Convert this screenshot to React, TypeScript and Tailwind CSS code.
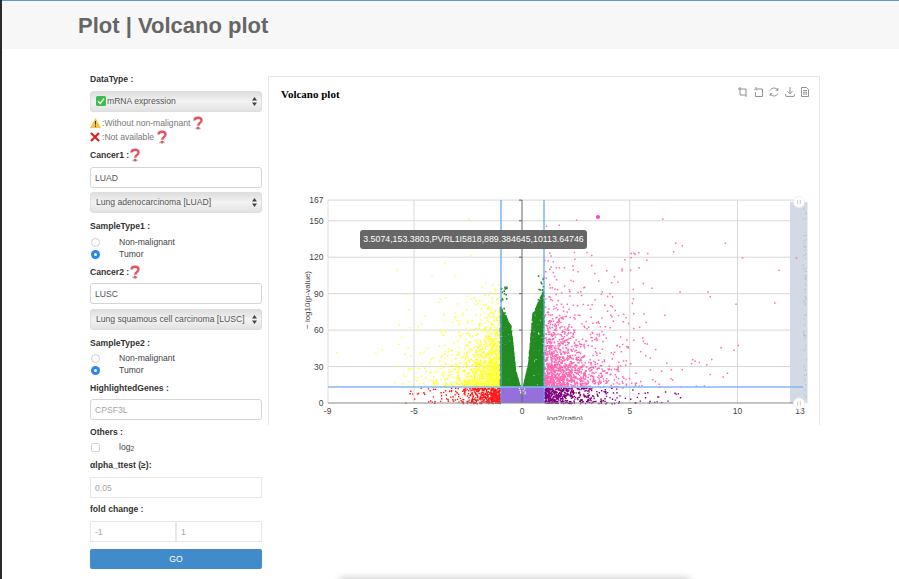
import { useMemo, type ReactNode } from "react";

const sans = { fontFamily: '"Liberation Sans", Arial, sans-serif' };

const px = (v: number) => (v < 0 ? 522 + v * 21.6 : 522 + v * 21.55);
const py = (v: number) => 403 - v * 1.215;

const rng = (seed: number) => () => {
  seed |= 0;
  seed = (seed + 0x6d2b79f5) | 0;
  let t = Math.imul(seed ^ (seed >>> 15), 1 | seed);
  t = (t + Math.imul(t ^ (t >>> 7), 61 | t)) ^ t;
  return ((t ^ (t >>> 14)) >>> 0) / 4294967296;
};

const dot = (x: number, y: number, s = 1.4) =>
  `M${x.toFixed(1)} ${y.toFixed(1)}h${s}v${s}h-${s}z`;

// upper edge of the green cloud, by distance from zero
const greenCap = (a: number) => {
  if (a < 0.3) return 13 + (a - 0.08) * 70;
  if (a < 0.5) return 28 + (a - 0.3) * 190;
  return 66 + (a - 0.5) * 36;
};

const buildDots = () => {
  const r = rng(42);
  const expo = (m: number) => -Math.log(1 - r() * 0.999) * m;
  let green = "";
  let yellow = "";
  let pink = "";
  let red = "";
  let purple = "";
  let mid = "";
  let zoomShade = "";

  for (let i = 0; i < 5200; i++) {
    const side = r() < 0.5 ? -1 : 1;
    const a = 0.08 + Math.pow(r(), 0.85) * 0.92;
    const cap = greenCap(a) * (side < 0 ? 0.95 : 1.1);
    const v = 13 + Math.pow(r(), 1.05) * Math.max(cap - 13, 1);
    green += dot(px(side * a) - 0.8, py(v) - 0.8, 1.6);
  }
  for (let i = 0; i < 60; i++) {
    const side = r() < 0.4 ? -1 : 1;
    green += dot(px(side * (0.72 + r() * 0.28)), py(66 + r() * (side < 0 ? 30 : 40)), 1.6);
  }
  for (let i = 0; i < 1450; i++) {
    const a = 1.02 + expo(0.95);
    const v = 13 + expo(22);
    if (a > 6 || v > 112 - a * 6) continue;
    yellow += dot(px(-a), py(v));
  }
  const yellowExtras = [
    [-8.6, 15], [-8.6, 42], [-6.8, 42], [-6.5, 44], [-5.7, 65], [-5.6, 55], [-5.3, 46], [-5.8, 110],
    [-5.1, 29], [-4.9, 31], [-4.7, 66], [-5.4, 90], [-4.2, 105], [-3.6, 116], [-3.1, 105], [-2.5, 152],
    [-2.4, 122], [-5.4, 22], [-5.5, 24], [-4.5, 72],
  ];
  yellowExtras.forEach(([a, v]) => (yellow += dot(px(a), py(v))));
  for (let i = 0; i < 1300; i++) {
    const a = 1.02 + expo(1.2);
    const v = 13 + expo(24);
    if (a > 11 || v > 125) continue;
    pink += dot(px(a), py(v), 1.5);
  }
  for (let i = 0; i < 30; i++) {
    pink += dot(px(1 + r() * 5), py(40 + r() * 85), 1.5);
  }
  const pinkExtras = [
    [10.2, 120], [11.7, 83], [9.9, 82], [8.6, 92], [8.7, 88], [9.4, 132], [7.1, 132], [7.4, 130],
    [6.5, 152], [1.1, 146], [1.7, 147], [7.3, 92], [6, 95], [11.9, 110], [12.7, 120], [5, 110],
    [5.4, 112], [7, 125], [3.2, 122], [2.5, 151], [9.2, 46], [9.8, 44], [10, 48], [8, 35],
    [8.2, 34], [8.7, 24], [9.3, 22], [9.5, 25], [6.9, 28], [7.4, 28],
  ];
  pinkExtras.forEach(([a, v]) => (pink += dot(px(a), py(v), 1.5)));
  for (let i = 0; i < 480; i++) {
    const a = 1.02 + expo(0.85);
    if (a > 5.6) continue;
    red += dot(px(-a), py(r() * 12.8));
  }
  for (let i = 0; i < 500; i++) {
    const a = 1.02 + expo(1.0);
    if (a > 7.8) continue;
    purple += dot(px(a), py(r() * 12.8));
  }
  for (let i = 0; i < 12; i++) {
    purple += dot(px(5 + r() * 2.8), py(r() * 10));
  }
  for (let i = 0; i < 12; i++) {
    mid += dot(px(-0.15 + r() * 0.3), py(8 + r() * 5), 1.2);
  }
  for (let i = 0; i < 90; i++) {
    zoomShade += dot(803 + r() * 3, 205 + r() * 195, 1);
  }
  return { green, yellow, pink, red, purple, mid, zoomShade };
};

const Help = () => (
  <svg width="12" height="14" viewBox="0 0 11 13" className="shrink-0">
    <path d="M3 11.6h5" stroke="#bbb" strokeWidth="1.5" />
    <path d="M2.2 4.2C2.4 1 8.6.6 8.8 4c.1 2.4-3 2.3-3.1 5" fill="none" stroke="#e8525c" strokeWidth="2.2" />
    <circle cx="5.6" cy="11.2" r="1.3" fill="#e8525c" />
  </svg>
);

const Label = ({ children, className = "" }: { children: ReactNode; className?: string }) => (
  <div className={`flex items-center text-[8.6px] leading-[12px] font-bold text-[#333] ${className}`}>{children}</div>
);

const Select = ({ children, className = "" }: { children: ReactNode; className?: string }) => (
  <div
    className={`flex items-center justify-between h-[21px] pl-[5px] pr-[4px] rounded-[3px] border border-[#dedede] bg-gradient-to-b from-[#dedede] via-[#f3f3f3] to-[#e2e2e2] text-[8.6px] text-[#555] ${className}`}
  >
    <span className="flex items-center whitespace-nowrap">{children}</span>
    <svg width="5" height="9" viewBox="0 0 5 9">
      <path d="M2.5 0L5 3.4H0zM2.5 9L0 5.6h5z" fill="#444" />
    </svg>
  </div>
);

const TextBox = ({ value, placeholder, className = "" }: { value?: string; placeholder?: string; className?: string }) => (
  <input
    readOnly
    value={value}
    placeholder={placeholder}
    className={`block w-full h-[21px] px-[4px] border border-[#d5d5d5] rounded-[3px] bg-white text-[8.6px] text-[#555] placeholder:text-[#a5a5a5] outline-none ${className}`}
  />
);

const Radio = ({ checked, label }: { checked?: boolean; label: string }) => (
  <div className="flex items-center h-[12.5px]">
    {checked ? (
      <span className="flex items-center justify-center w-[9px] h-[9px] ml-[1px] rounded-full bg-[#2a85f5]">
        <span className="w-[3px] h-[3px] rounded-full bg-white" />
      </span>
    ) : (
      <span className="w-[9px] h-[9px] ml-[1px] rounded-full border border-[#cfcfcf] bg-white" />
    )}
    <span className="ml-[19px] text-[8.6px] text-[#444]">{label}</span>
  </div>
);

const Toolbar = () => (
  <div className="flex gap-[5.5px] mt-[10px] mr-[9px]">
    <svg width="10" height="10" viewBox="0 0 10 10" fill="none" stroke="#777" strokeWidth="0.8">
      <path d="M0 2h8v8M2 0v8h6" />
    </svg>
    <svg width="10" height="10" viewBox="0 0 10 10" fill="none" stroke="#777" strokeWidth="0.8">
      <path d="M2 0v2h6.5v7.5H1.5V5M0 3.5l1.5-1.5L3 3.5" />
    </svg>
    <svg width="10" height="10" viewBox="0 0 10 10" fill="none" stroke="#777" strokeWidth="0.8">
      <path d="M1 3.5A4.3 4.3 0 0 1 8.6 3M9 6.5A4.3 4.3 0 0 1 1.4 7M8.8 1v2.3H6.6M1.2 9V6.7h2.2" />
    </svg>
    <svg width="10" height="10" viewBox="0 0 10 10" fill="none" stroke="#777" strokeWidth="0.8">
      <path d="M5 0v6.5M2.5 4.2L5 6.8l2.5-2.6M0 7l1 2.4h8L10 7" />
    </svg>
    <svg width="10" height="10" viewBox="0 0 10 10" fill="none" stroke="#777" strokeWidth="0.8">
      <path d="M1.5.5h5l2 2v7h-7zM3 3.5h4M3 5.3h4M3 7.1h4" />
    </svg>
  </div>
);

const Chart = () => {
  const d = useMemo(buildDots, []);
  const vGrid = [-5, 5, 10];
  const hGrid = [30, 60, 90, 120, 150, 167];
  const xTicks: [number, string][] = [[-9, "-9"], [-5, "-5"], [0, "0"], [5, "5"], [10, "10"], [12.9, "13"]];
  const yTicks = [0, 30, 60, 90, 120, 150, 167];
  return (
    <svg viewBox="269 195 550 225" width="550" height="225" className="block" style={sans}>
      {vGrid.map((v) => (
        <line key={v} x1={px(v)} x2={px(v)} y1="200" y2="403" stroke="#d8d8d8" />
      ))}
      {hGrid.map((v) => (
        <line key={v} x1="328" x2="803" y1={py(v)} y2={py(v)} stroke="#d8d8d8" />
      ))}
      <line x1="328" x2="328" y1="200" y2="403" stroke="#ddd" />
      <rect x="790" y="202" width="17.5" height="201" fill="#d2dae5" />
      <path d={d.zoomShade} fill="#b5bcc6" />
      <path d={d.yellow} fill="#ffff33" />
      <path d={d.pink} fill="#ff69b4" />
      <path d={d.green} fill="#228b22" />
      <rect x="501" y="387" width="43" height="16" fill="#9370db" />
      <path d={d.mid} fill="#ffffff" />
      <path d={d.red} fill="#ff1a1a" />
      <path d={d.purple} fill="#800080" />
      <line x1="522" x2="522" y1="200" y2="403" stroke="#666" />
      {[30, 60, 90, 120, 150, 167].map((v) => (
        <line key={v} x1="519" x2="522" y1={py(v)} y2={py(v)} stroke="#666" />
      ))}
      <line x1="328" x2="803" y1="403" y2="403" stroke="#888" />
      <line x1="501" x2="501" y1="200" y2="403" stroke="#5b9ff5" strokeWidth="1.2" />
      <line x1="544" x2="544" y1="200" y2="403" stroke="#5b9ff5" strokeWidth="1.2" />
      <line x1="328" x2="803" y1="387" y2="387" stroke="#86b6f5" strokeWidth="1.6" />
      <circle cx="598" cy="217" r="2" fill="#ff40c0" />
      {xTicks.map(([v, t]) => (
        <text key={t} x={px(v)} y="414" textAnchor="middle" fontSize="8.5" fill="#444">
          {t}
        </text>
      ))}
      {yTicks.map((v) => (
        <text key={v} x="323.5" y={py(v) + 3} textAnchor="end" fontSize="8.5" fill="#444">
          {v}
        </text>
      ))}
      <text x="565" y="421" textAnchor="middle" fontSize="8" fill="#444">
        log2(ratio)
      </text>
      <text transform="translate(310 300) rotate(-90)" textAnchor="middle" fontSize="8" fill="#444">
        − log10(p-value)
      </text>
      {[[799, 202], [799, 403.5]].map(([x, y]) => (
        <g key={y}>
          <circle cx={x} cy={y} r="5.7" fill="#fff" stroke="#e4e4e4" strokeWidth="0.6" />
          <path d={`M${x - 1.3} ${y - 2}v4M${x + 1.3} ${y - 2}v4`} stroke="#bbb" strokeWidth="0.8" />
        </g>
      ))}
    </svg>
  );
};

export default function App() {
  return (
    <div className="relative w-[899px] h-[579px] overflow-hidden bg-white" style={sans}>
      <div className="absolute left-0 top-0 bottom-0 w-[2px] bg-[#2a2a2a]" />
      <div className="absolute left-[340px] bottom-[-6px] w-[350px] h-[8px] bg-[#d5d5d5] blur-[3px]" />
      <div className="h-[49px] pl-[78px] pt-[11px] bg-[#f7f7f7] border-t border-[#5b9bd5] text-[22px] leading-[28px] font-bold text-[#666]">
        Plot | Volcano plot
      </div>
      <div className="flex pl-[90px] pt-[27px]">
        <div className="w-[172px]">
          <Label className="mt-[-3px]">DataType :</Label>
          <Select className="mt-[6px]">
            <svg width="10" height="10" viewBox="0 0 10 10" className="mr-[1px]">
              <rect width="10" height="10" rx="1.5" fill="#3fbd4c" />
              <path d="M2 5.2l2.2 2.2L8 2.6" fill="none" stroke="#fff" strokeWidth="1.5" />
            </svg>
            mRNA expression
          </Select>
          <div className="flex items-center h-[14px] mt-[4px] text-[8.6px] text-[#777]">
            <svg width="11" height="10" viewBox="0 0 11 10">
              <path d="M5.5 0L11 10H0z" fill="#f5c542" />
              <path d="M5.5 3v3.6M5.5 7.6v1.2" stroke="#333" strokeWidth="1" />
            </svg>
            <span className="ml-[1px] mr-[2px]">:Without non-malignant</span>
            <Help />
          </div>
          <div className="flex items-center h-[14px] text-[8.6px] text-[#777]">
            <svg width="10" height="10" viewBox="0 0 10 10">
              <path d="M1 1l8 8M9 1l-8 8" stroke="#e0201c" strokeWidth="2.2" />
            </svg>
            <span className="ml-[2px] mr-[2px]">:Not available</span>
            <Help />
          </div>
          <Label className="mt-[4px]">
            Cancer1 :<Help />
          </Label>
          <TextBox value="LUAD" className="mt-[5px]" />
          <Select className="mt-[4px]">Lung adenocarcinoma [LUAD]</Select>
          <Label className="mt-[7px]">SampleType1 :</Label>
          <div className="mt-[4px]">
            <Radio label="Non-malignant" />
            <Radio checked label="Tumor" />
          </div>
          <Label className="mt-[4px]">
            Cancer2 :<Help />
          </Label>
          <TextBox value="LUSC" className="mt-[4px]" />
          <Select className="mt-[5px]">Lung squamous cell carcinoma [LUSC]</Select>
          <Label className="mt-[7px]">SampleType2 :</Label>
          <div className="mt-[3px]">
            <Radio label="Non-malignant" />
            <Radio checked label="Tumor" />
          </div>
          <Label className="mt-[5px]">HighlightedGenes :</Label>
          <TextBox placeholder="CPSF3L" className="mt-[5px]" />
          <Label className="mt-[6px]">Others :</Label>
          <div className="flex items-center h-[14px] mt-[2px]">
            <span className="w-[9px] h-[9px] ml-[1px] rounded-[2px] border border-[#d5d5d5] bg-white" />
            <span className="ml-[19px] text-[8.6px] text-[#444]">
              log<sub className="text-[6.5px]">2</sub>
            </span>
          </div>
          <Label className="mt-[5px]">αlpha_ttest (≥):</Label>
          <TextBox placeholder="0.05" className="mt-[6px] border-[#e8e8e8] rounded-none" />
          <Label className="mt-[5px]">fold change :</Label>
          <div className="flex mt-[6px]">
            <TextBox placeholder="-1" className="border-[#e8e8e8] rounded-none" />
            <TextBox placeholder="1" className="border-[#e8e8e8] rounded-none" />
          </div>
          <div className="flex items-center justify-center h-[20px] mt-[7px] rounded-[2px] bg-[#428bca] text-[8.6px] text-white">
            GO
          </div>
        </div>
        <div className="relative w-[552px] h-[349px] ml-[6px] border-x border-t border-[#e6e6e6]">
          <div className="flex justify-between h-[118px]">
            <div
              className="ml-[12px] mt-[10px] text-[11px] leading-[15px] font-bold text-black"
              style={{ fontFamily: '"Liberation Serif", "Times New Roman", serif' }}
            >
              Volcano plot
            </div>
            <Toolbar />
          </div>
          <Chart />
          <div className="absolute left-[91px] top-[153px] w-[227px] h-[19px] flex items-center justify-center rounded-[3px] bg-[#666] text-[8.8px] text-white whitespace-nowrap">
            3.5074,153.3803,PVRL1I5818,889.384645,10113.64746
          </div>
        </div>
      </div>
    </div>
  );
}
